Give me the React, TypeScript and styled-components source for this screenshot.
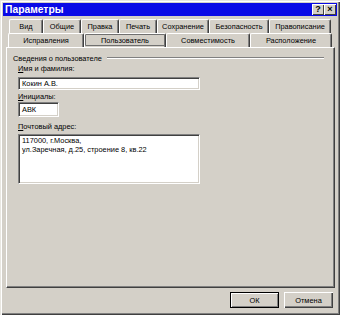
import React from 'react';
import styled, { createGlobalStyle } from 'styled-components';

const GlobalStyle = createGlobalStyle`
  html, body {
    margin: 0;
    padding: 0;
    background: #d4d0c8;
  }
  * {
    box-sizing: border-box;
  }
`;

const Window = styled.div`
  width: 340px;
  height: 315px;
  display: flex;
  flex-direction: column;
  padding: 3px 3px 3px 3px;
  background: #d4d0c8;
  font-family: 'Liberation Sans', Arial, sans-serif;
  font-size: 7.4px;
  color: #000;
  box-shadow: inset 1px 1px 0 #e8e6e0, inset 2px 2px 0 #ffffff,
    inset -1px -1px 0 #404040, inset -2px -2px 0 #808080;
`;

const TitleBar = styled.div`
  height: 13px;
  display: flex;
  align-items: center;
  justify-content: space-between;
  padding: 0 1px 0 2px;
  background: #0a0ae6;
  color: #fff;
`;

const Title = styled.span`
  font-weight: bold;
  font-size: 10.3px;
`;

const TitleButtons = styled.div`
  display: flex;
`;

const CaptionButton = styled.div`
  width: 12px;
  height: 11px;
  display: flex;
  align-items: center;
  justify-content: center;
  background: #d4d0c8;
  color: #000;
  font-size: 9px;
  font-weight: bold;
  line-height: 1;
  box-shadow: inset 1px 1px 0 #fff, inset -1px -1px 0 #404040;
`;

const Tabs = styled.div`
  display: flex;
  flex-direction: column;
  margin-top: 3px;
`;

const TabRow = styled.div<{ $indent: number }>`
  display: flex;
  padding-left: ${(p) => p.$indent}px;
  height: 14px;
`;

const Tab = styled.div<{ $w: number; $active?: boolean }>`
  width: ${(p) => p.$w}px;
  height: 14px;
  display: flex;
  align-items: center;
  justify-content: center;
  white-space: nowrap;
  border-top: 1px solid #fff;
  border-left: 1px solid #fff;
  border-right: 1px solid #404040;
  box-shadow: inset -1px 0 0 #808080;
  border-radius: 2px 2px 0 0;
  ${(p) =>
    p.$active &&
    `
    outline: 1px solid #707070;
    outline-offset: -2px;
  `}
`;

const Panel = styled.div`
  flex: none;
  height: 241px;
  margin: 0 2px 0 3px;
  padding: 4px 10px 0 6px;
  border-top: 1px solid #fff;
  border-left: 1px solid #fff;
  border-right: 1px solid #404040;
  border-bottom: 1px solid #404040;
  box-shadow: inset -1px -1px 0 #808080;
  display: flex;
  flex-direction: column;
`;

const GroupHeader = styled.div`
  display: flex;
  align-items: center;
  gap: 5px;
  height: 12px;
`;

const GroupLine = styled.div`
  flex: 1;
  height: 2px;
  border-top: 1px solid #808080;
  border-bottom: 1px solid #fff;
`;

const Fields = styled.div`
  display: flex;
  flex-direction: column;
  padding-left: 5px;
`;

const Label = styled.div<{ $top: number }>`
  margin-top: ${(p) => p.$top}px;
  height: 10px;
  line-height: 10px;
`;

const Key = styled.span`
  text-decoration: underline;
`;

const Field = styled.div<{ $w: number; $h: number; $top: number }>`
  width: ${(p) => p.$w}px;
  height: ${(p) => p.$h}px;
  margin-top: ${(p) => p.$top}px;
  padding: 1px 3px;
  background: #fff;
  line-height: 9px;
  border-top: 1px solid #808080;
  border-left: 1px solid #808080;
  border-right: 1px solid #fff;
  border-bottom: 1px solid #fff;
  box-shadow: inset 1px 1px 0 #404040, inset -1px -1px 0 #d4d0c8;
`;

const SingleLine = styled(Field)`
  display: flex;
  align-items: center;
  padding: 0 3px;
`;

const Footer = styled.div`
  display: flex;
  justify-content: flex-end;
  gap: 5px;
  padding: 4px 4px 0 0;
`;

const Button = styled.div<{ $default?: boolean }>`
  width: 49px;
  height: 16px;
  display: flex;
  align-items: center;
  justify-content: center;
  background: #d4d0c8;
  box-shadow: ${(p) =>
    p.$default
      ? 'inset 1px 1px 0 #000, inset -1px -1px 0 #000, inset 2px 2px 0 #fff, inset -2px -2px 0 #808080'
      : 'inset 1px 1px 0 #fff, inset -1px -1px 0 #404040, inset -2px -2px 0 #808080'};
`;

const topTabs = [
  { t: 'Вид', w: 34 },
  { t: 'Общие', w: 38 },
  { t: 'Правка', w: 38 },
  { t: 'Печать', w: 38 },
  { t: 'Сохранение', w: 52 },
  { t: 'Безопасность', w: 60 },
  { t: 'Правописание', w: 62 },
];

const bottomTabs = [
  { t: 'Исправления', w: 76 },
  { t: 'Пользователь', w: 82, active: true },
  { t: 'Совместимость', w: 84 },
  { t: 'Расположение', w: 82 },
];

export default function App() {
  return (
    <>
      <GlobalStyle />
      <Window>
        <TitleBar>
          <Title>Параметры</Title>
          <TitleButtons>
            <CaptionButton>?</CaptionButton>
            <CaptionButton>×</CaptionButton>
          </TitleButtons>
        </TitleBar>

        <Tabs>
          <TabRow $indent={6}>
            {topTabs.map((tab) => (
              <Tab key={tab.t} $w={tab.w}>
                {tab.t}
              </Tab>
            ))}
          </TabRow>
          <TabRow $indent={5}>
            {bottomTabs.map((tab) => (
              <Tab key={tab.t} $w={tab.w} $active={tab.active}>
                {tab.t}
              </Tab>
            ))}
          </TabRow>
        </Tabs>

        <Panel>
          <GroupHeader>
            <span>Сведения о пользователе</span>
            <GroupLine />
          </GroupHeader>
          <Fields>
            <Label $top={0}>
              <Key>И</Key>мя и фамилия:
            </Label>
            <SingleLine $w={182} $h={13} $top={3}>
              Кокин А.В.
            </SingleLine>
            <Label $top={2}>
              <Key>И</Key>нициалы:
            </Label>
            <SingleLine $w={41} $h={15} $top={0}>
              АВК
            </SingleLine>
            <Label $top={5}>
              <Key>П</Key>очтовый адрес:
            </Label>
            <Field $w={182} $h={50} $top={2}>
              117000, г.Москва,
              <br />
              ул.Заречная, д.25, строение 8, кв.22
            </Field>
          </Fields>
        </Panel>

        <Footer>
          <Button $default>ОК</Button>
          <Button>Отмена</Button>
        </Footer>
      </Window>
    </>
  );
}
